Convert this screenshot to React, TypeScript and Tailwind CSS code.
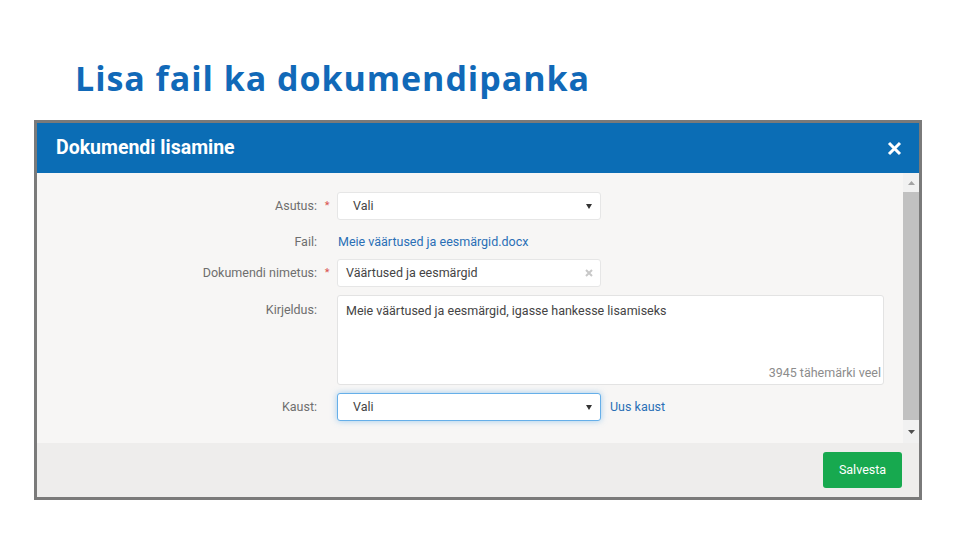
const font = { fontFamily: 'Roboto, "Liberation Sans", sans-serif' };

function Caret() {
  return (
    <svg width="6" height="5" viewBox="0 0 6 5" className="shrink-0">
      <path d="M0 0h6L3 5z" fill="#333" />
    </svg>
  );
}

function Row({ label, required, children, className = '' }: { label: string; required?: boolean; children: React.ReactNode; className?: string }) {
  return (
    <div className={`grid grid-cols-[280px_20px_1fr] items-center ${className}`}>
      <span className="text-right text-[12.5px] text-[#6e6e6e]">{label}</span>
      <span className="text-center text-[11px] text-[#d9534f]">{required ? '*' : ''}</span>
      <div className="flex items-center">{children}</div>
    </div>
  );
}

function Select({ focused }: { focused?: boolean }) {
  return (
    <div
      className={`flex h-[28px] w-[264px] items-center justify-between rounded-[3px] border bg-white pl-[15px] pr-[8px] text-[12.5px] text-[#444] ${
        focused ? 'border-[#66afe9] shadow-[0_0_6px_rgba(102,175,233,0.6)]' : 'border-[#e6e6e6]'
      }`}
    >
      <span>Vali</span>
      <Caret />
    </div>
  );
}

export default function App() {
  return (
    <div className="h-[539px] w-[958px] overflow-hidden bg-white" style={font}>
      <h1
        className="pl-[75px] pt-[61px] text-[34px] font-bold leading-none tracking-[0.95px] text-[#1169b8]"
        style={{ fontFamily: '"Open Sans", Lato, sans-serif' }}
      >
        Lisa fail ka dokumendipanka
      </h1>

      <div className="ml-[34px] mt-[25px] flex h-[380px] w-[888px] flex-col border-x-[3px] border-b-[3px] border-t-[3px] border-[#7a7a7a]">
        <div className="flex h-[50px] shrink-0 items-center justify-between bg-[#0b6db5] pl-[19px] pr-[17px]">
          <span className="text-[19.5px] font-bold text-white">Dokumendi lisamine</span>
          <svg width="15" height="15" viewBox="0 0 15 15">
            <path d="M2 2l11 11M13 2L2 13" stroke="#fff" strokeWidth="3" />
          </svg>
        </div>

        <div className="flex h-[270px] shrink-0 bg-[#f7f6f5]">
          <div className="flex-1 pr-[19px] pt-[19px]">
            <Row label="Asutus:" required>
              <Select />
            </Row>
            <Row label="Fail:" className="mt-[8px] h-[28px]">
              <span className="pl-[1px] text-[12.5px] text-[#2a6fb5]">Meie väärtused ja eesmärgid.docx</span>
            </Row>
            <Row label="Dokumendi nimetus:" required className="mt-[3px]">
              <div className="flex h-[28px] w-[264px] items-center justify-between rounded-[3px] border border-[#e6e6e6] bg-white pl-[8px] pr-[7px] text-[12.5px] text-[#444]">
                <span>Väärtused ja eesmärgid</span>
                <svg width="8" height="8" viewBox="0 0 8 8">
                  <path d="M1 1l6 6M7 1L1 7" stroke="#c8c8c8" strokeWidth="2" />
                </svg>
              </div>
            </Row>
            <div className="mt-[8px] grid grid-cols-[280px_20px_1fr] items-start">
              <span className="pt-[6px] text-right text-[12.5px] text-[#6e6e6e]">Kirjeldus:</span>
              <span />
              <div className="flex h-[90px] flex-col justify-between rounded-[3px] border border-[#e3e3e3] bg-white pb-[1px] pl-[8px] pr-[2px] pt-[6px] text-[12.5px] text-[#444]">
                <span>Meie väärtused ja eesmärgid, igasse hankesse lisamiseks</span>
                <span className="self-end text-[#8c8c8c]">3945 tähemärki veel</span>
              </div>
            </div>
            <Row label="Kaust:" className="mt-[8px]">
              <Select focused />
              <span className="ml-[9px] text-[12.5px] text-[#2a6fb5]">Uus kaust</span>
            </Row>
          </div>

          <div className="flex w-[16px] shrink-0 flex-col items-center bg-[#f1f1f1]">
            <div className="flex h-[19px] items-center justify-center">
              <svg width="7" height="4" viewBox="0 0 7 4">
                <path d="M0 4h7L3.5 0z" fill="#a3a3a3" />
              </svg>
            </div>
            <div className="h-[228px] w-full bg-[#c1c1c1]" />
            <div className="flex flex-1 items-center justify-center">
              <svg width="7" height="4" viewBox="0 0 7 4">
                <path d="M0 0h7L3.5 4z" fill="#505050" />
              </svg>
            </div>
          </div>
        </div>

        <div className="flex flex-1 items-center justify-end bg-[#eeedec] pr-[17px]">
          <button className="h-[36px] w-[79px] rounded-[3px] bg-[#17a94f] text-[12.5px] text-white">Salvesta</button>
        </div>
      </div>
    </div>
  );
}
